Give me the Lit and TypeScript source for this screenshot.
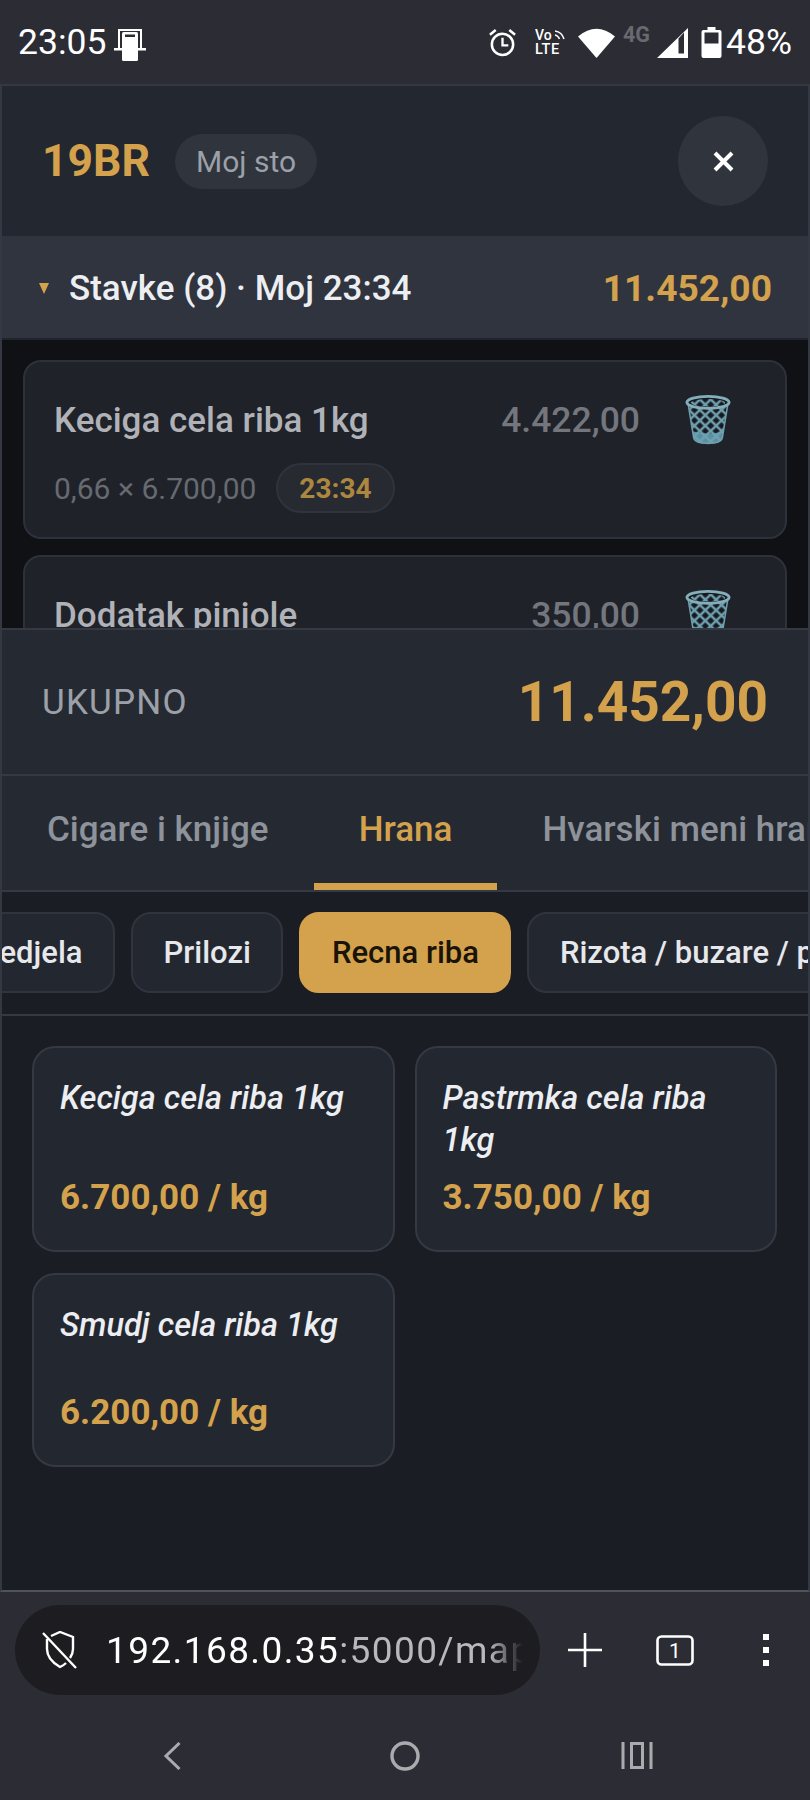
import { LitElement, html, css, svg } from 'lit';
import { customElement } from 'lit/decorators.js';

type Line = { name: string; amount: string; sub?: string; time?: string };
type Dish = { name: string; price: string };

const lines: Line[] = [
  { name: 'Keciga cela riba 1kg', amount: '4.422,00', sub: '0,66 × 6.700,00', time: '23:34' },
  { name: 'Dodatak pinjole', amount: '350,00' },
];

const dishes: Dish[] = [
  { name: 'Keciga cela riba 1kg', price: '6.700,00 / kg' },
  { name: 'Pastrmka cela riba 1kg', price: '3.750,00 / kg' },
  { name: 'Smudj cela riba 1kg', price: '6.200,00 / kg' },
];

const trash = svg`
  <svg class="trash" viewBox="0 0 48 56" width="46" height="52" preserveAspectRatio="none">
    <defs>
      <pattern id="mesh" width="8" height="8" patternUnits="userSpaceOnUse" patternTransform="rotate(45 24 20)">
        <rect width="8" height="8" fill="none" stroke="#6f9fae" stroke-width="2.6"/>
      </pattern>
    </defs>
    <path d="M3 9 L9 47 Q10 53 24 53 Q38 53 39 47 L45 9 Z" fill="#161a20"/>
    <path d="M3 9 L9 47 Q10 53 24 53 Q38 53 39 47 L45 9 Z" fill="url(#mesh)"/>
    <path d="M8 40 Q24 45 40 40 L39 47 Q38 54 24 54 Q10 54 9 47 Z" fill="#6ba3b5" opacity=".85"/>
    <path d="M3 9 L9 47 Q10 53 24 53 Q38 53 39 47 L45 9" fill="none" stroke="#6f9fae" stroke-width="1.6"/>
    <ellipse cx="24" cy="9" rx="22" ry="6.5" fill="#161a20" stroke="#86aeba" stroke-width="3"/>
    <ellipse cx="24" cy="9.5" rx="18" ry="4" fill="url(#mesh)"/>
  </svg>`;

@customElement('app-root')
export class AppRoot extends LitElement {
  static styles = css`
    :host {
      display: block;
      width: 810px;
      height: 1800px;
      overflow: hidden;
      background: #2c2c34;
      font-family: Roboto, "Liberation Sans", sans-serif;
      color: #eceef2;
    }
    .page { display: flex; flex-direction: column; height: 1800px; }

    .status {
      height: 84px;
      flex: none;
      box-sizing: border-box;
      padding: 0 18px;
      display: flex;
      align-items: center;
      justify-content: space-between;
      font-size: 35.5px;
      color: #fff;
    }
    .status-side { display: flex; align-items: center; }
    .status-left svg { margin: 5px 0 0 8px; }
    .status-right svg { display: block; flex: none; }
    .pct { margin-left: 4px; }

    .panel {
      flex: 1;
      min-height: 0;
      display: flex;
      flex-direction: column;
      overflow: hidden;
      border: 2px solid #333843;
      border-bottom-color: #50535c;
      background: #1a1d24;
    }

    .head {
      height: 152px;
      flex: none;
      box-sizing: border-box;
      padding: 0 40px 0 40px;
      display: flex;
      align-items: center;
      background: #23272f;
      border-bottom: 2px solid #2f343e;
    }
    .code { font-size: 44.5px; font-weight: 700; color: #d4a24c; }
    .tag {
      margin-left: 25px;
      height: 55px;
      padding: 0 21px;
      display: flex;
      align-items: center;
      border-radius: 28px;
      background: #2f343d;
      color: #9ca0a8;
      font-size: 30px;
    }
    .close {
      margin-left: auto;
      width: 90px;
      height: 90px;
      border-radius: 50%;
      background: #2f343d;
      display: flex;
      align-items: center;
      justify-content: center;
    }

    .bar {
      height: 100px;
      flex: none;
      box-sizing: border-box;
      padding: 0 36px 0 37px;
      display: flex;
      align-items: center;
      background: #2f343e;
      font-size: 35px;
      font-weight: 500;
    }
    .caret {
      width: 0;
      height: 0;
      border: 5.5px solid transparent;
      border-top: 11px solid #d4a24c;
      border-bottom: 0;
      margin-right: 20px;
    }
    .bar-total { margin-left: auto; color: #d4a24c; font-size: 37.2px; font-weight: 700; }

    .list {
      height: 290px;
      flex: none;
      box-sizing: border-box;
      overflow: hidden;
      padding: 20px 21px 0;
      background: #0f1115;
      border-top: 2px solid #20242c;
      display: flex;
      flex-direction: column;
      gap: 16px;
    }
    .line {
      flex: none;
      height: 179px;
      box-sizing: border-box;
      padding: 30px 30px 0 29px;
      border: 2px solid #2d3139;
      border-radius: 18px;
      background: #1f2229;
    }
    .line-top { display: flex; align-items: center; height: 56px; }
    .line-name { font-size: 35px; font-weight: 500; color: #b0b2b7; flex: 1; white-space: nowrap; }
    .line-amount { font-size: 35.5px; font-weight: 500; color: #74767e; }
    .trash { margin-left: 45px; margin-right: 24px; flex: none; }
    .line-sub { display: flex; align-items: center; margin-top: 15px; font-size: 30px; color: #666a71; }
    .time {
      margin-left: 20px;
      height: 50px;
      padding: 0 21px;
      display: flex;
      align-items: center;
      border-radius: 25px;
      background: #272a31;
      border: 2px solid #2f333b;
      color: #ac8740;
      font-size: 28px;
      font-weight: 700;
      box-sizing: border-box;
    }

    .total {
      height: 148px;
      flex: none;
      box-sizing: border-box;
      padding: 0 40px;
      display: flex;
      align-items: center;
      justify-content: space-between;
      background: #252a32;
      border-top: 2px solid #343944;
      border-bottom: 2px solid #343944;
    }
    .total-label { font-size: 35px; color: #9ca0a8; letter-spacing: 1.2px; }
    .total-value { font-size: 55px; font-weight: 700; color: #d4a24c; }

    .tabs {
      height: 116px;
      flex: none;
      box-sizing: border-box;
      display: flex;
      overflow: hidden;
      background: #252a32;
      border-bottom: 2px solid #343944;
    }
    .tab {
      flex: none;
      box-sizing: border-box;
      padding: 33px 45px 0;
      font-size: 35px;
      font-weight: 500;
      color: #8e929a;
      border-bottom: 7px solid transparent;
      white-space: nowrap;
    }
    .tab.on { color: #d4a24c; border-bottom-color: #d4a24c; }

    .chips {
      height: 124px;
      flex: none;
      box-sizing: border-box;
      padding-bottom: 1px;
      display: flex;
      align-items: center;
      gap: 16px;
      overflow: hidden;
      background: #1a1d24;
      border-bottom: 2px solid #343944;
    }
    .chip {
      flex: none;
      box-sizing: border-box;
      height: 81px;
      padding: 0 30.5px;
      display: flex;
      align-items: center;
      border: 2px solid #2f343e;
      border-radius: 20px;
      background: #23272f;
      font-size: 31px;
      font-weight: 500;
      color: #e6e8ec;
      white-space: nowrap;
    }
    .chip.first { margin-left: -57px; }
    .chip.on { background: #d4a24c; border-color: #d4a24c; color: #1a1408; }

    .grid {
      flex: 1;
      min-height: 0;
      box-sizing: border-box;
      padding: 30px 31px 0 30px;
      display: grid;
      grid-template-columns: 1fr 1fr;
      grid-auto-rows: min-content;
      gap: 21px 20px;
    }
    .dish {
      box-sizing: border-box;
      min-height: 194px;
      padding: 30px 26px;
      border: 2px solid #343944;
      border-radius: 23px;
      background: #23272f;
      display: flex;
      flex-direction: column;
      justify-content: space-between;
    }
    .dish-name {
      font-size: 32.5px;
      font-weight: 500;
      font-style: italic;
      line-height: 41.5px;
      color: #eceef2;
      margin-bottom: 14px;
    }
    .dish-price { font-size: 35px; font-weight: 700; color: #d4a24c; line-height: 45px; }

    .chrome { height: 208px; flex: none; }
    .toolbar {
      height: 119px;
      box-sizing: border-box;
      padding: 13px 0 0 15px;
      display: flex;
    }
    .url {
      width: 525px;
      height: 90px;
      box-sizing: border-box;
      padding-left: 26px;
      border-radius: 45px;
      background: #1d1d21;
      display: flex;
      align-items: center;
      overflow: hidden;
    }
    .url-text {
      margin-left: 29px;
      width: 417px;
      overflow: hidden;
      white-space: nowrap;
      font-size: 37px;
      letter-spacing: 1.4px;
      color: #fff;
      -webkit-mask-image: linear-gradient(90deg, #000 92%, transparent 100%);
      mask-image: linear-gradient(90deg, #000 92%, transparent 100%);
    }
    .url-text span { color: #b9b9bd; }
    .tools { display: flex; align-items: center; height: 90px; }
    .nav {
      height: 89px;
      display: flex;
      align-items: center;
      padding-left: 163px;
      box-sizing: border-box;
    }
    .nav svg { flex: none; }
  `;

  private statusBar() {
    return html`
      <div class="status">
        <div class="status-side status-left">
          <span>23:05</span>
          <svg width="32" height="32" viewBox="0 0 32 32" fill="#fff">
            <path d="M4 0h24v20h-2V2H6v18H4z"/>
            <rect x="8" y="3" width="16" height="29" rx="1.5"/>
            <rect x="11" y="5.500" width="10" height="2.500" fill="#2c2c34"/>
            <rect x="0" y="19" width="8" height="2.500"/>
            <rect x="24" y="19" width="8" height="2.500"/>
          </svg>
        </div>
        <div class="status-side status-right">
          <svg width="29" height="30" viewBox="0 0 30 31" fill="none" stroke="#fff" stroke-width="2.6">
            <circle cx="15" cy="18" r="11"/>
            <path d="M15 11v8h6" stroke-width="2.4"/>
            <path d="M2 8l6-5M28 8l-6-5"/>
          </svg>
          <svg style="margin-left:18px" width="32" height="30" viewBox="0 -2 32 30" fill="#fff">
            <text x="0" y="11" font-family="Roboto" font-size="14" font-weight="500">Vo</text>
            <path d="M20 2q7 1 9 8M20 6q3 .5 4.500 4" fill="none" stroke="#fff" stroke-width="1.500"/>
            <text x="0" y="25" font-family="Roboto" font-size="14.500" font-weight="500" letter-spacing=".5">LTE</text>
          </svg>
          <svg style="margin-left:11px;margin-top:1px" width="37" height="31" viewBox="0 0 37 31" fill="#fff">
            <path d="M0 9.500Q18.500 -6 37 9.500L18.500 31Z"/>
          </svg>
          <svg style="margin:0 0 13px 8px" width="29" height="20" viewBox="0 0 29 20">
            <text x="0" y="16" font-family="Roboto" font-size="21.500" font-weight="700" fill="#69696f">4G</text>
          </svg>
          <svg style="margin:2px 0 0 5px" width="31" height="30" viewBox="0 0 31 30" fill-rule="evenodd" fill="#fff">
            <path d="M31 0V30H0ZM21.500 10.500V25.500H27V4.500Z"/>
          </svg>
          <svg style="margin-left:13px" width="21" height="31" viewBox="0 0 21 31" fill="#fff">
            <path d="M6.500 0h8v3h4a2 2 0 0 1 2 2v24a2 2 0 0 1-2 2H2.500a2 2 0 0 1-2-2V5a2 2 0 0 1 2-2h4z"/>
            <rect x="3.500" y="5.500" width="14" height="11" fill="#2c2c34"/>
          </svg>
          <span class="pct">48%</span>
        </div>
      </div>`;
  }

  private chrome() {
    return html`
      <div class="chrome">
        <div class="toolbar">
          <div class="url">
            <svg width="36" height="38" viewBox="0 0 36 38" fill="none" stroke="#fff" stroke-width="2.4" style="flex:none">
              <path d="M10 5 19 1l13 5v12c0 3-1 6-3 9"/>
              <path d="M25 32c-2 2-4 3-6 4-7-4-13-10-13-18V8"/>
              <path d="M2 2l33 35"/>
            </svg>
            <div class="url-text">192.168.0.35<span>:5000/map/table</span></div>
          </div>
          <div class="tools">
            <svg style="margin-left:28px" width="34" height="34" viewBox="0 0 34 34" stroke="#fff" stroke-width="2.6"><path d="M17 0v34M0 17h34"/></svg>
            <svg style="margin-left:54px" width="38" height="31" viewBox="0 0 38 31" fill="none">
              <rect x="1.500" y="1.500" width="35" height="28" rx="4" stroke="#fff" stroke-width="2.6"/>
              <text x="19" y="23" text-anchor="middle" font-family="Roboto" font-size="21" fill="#fff" stroke="none">1</text>
            </svg>
            <svg style="margin-left:69px" width="6" height="32" viewBox="0 0 6 32" fill="#fff">
              <rect width="6" height="6" y="0"/><rect width="6" height="6" y="13"/><rect width="6" height="6" y="26"/>
            </svg>
          </div>
        </div>
        <div class="nav">
          <svg width="18" height="28" viewBox="0 0 18 28" fill="none" stroke="#ababaf" stroke-width="3"><path d="M16.500 1 3 14l13.500 13"/></svg>
          <svg style="margin-left:209px" width="30" height="30" viewBox="0 0 30 30" fill="none" stroke="#ababaf" stroke-width="3.4"><circle cx="15" cy="15" r="13"/></svg>
          <svg style="margin-left:201px" width="32" height="27" viewBox="0 0 32 27" fill="none" stroke="#ababaf" stroke-width="3"><path d="M2 0v27M10.500 1.500h11v24h-11zM30 0v27"/></svg>
        </div>
      </div>`;
  }

  render() {
    return html`
      <div class="page">
        ${this.statusBar()}
        <div class="panel">
          <div class="head">
            <span class="code">19BR</span>
            <span class="tag">Moj sto</span>
            <div class="close">
              <svg width="21" height="21" viewBox="0 0 21 21" stroke="#fff" stroke-width="4"><path d="M2 2l17 17M19 2 2 19"/></svg>
            </div>
          </div>
          <div class="bar">
            <span class="caret"></span>
            <span>Stavke (8) · Moj 23:34</span>
            <span class="bar-total">11.452,00</span>
          </div>
          <div class="list">
            ${lines.map(l => html`
              <div class="line">
                <div class="line-top">
                  <span class="line-name">${l.name}</span>
                  <span class="line-amount">${l.amount}</span>
                  ${trash}
                </div>
                ${l.sub ? html`<div class="line-sub"><span>${l.sub}</span><span class="time">${l.time}</span></div>` : ''}
              </div>`)}
          </div>
          <div class="total">
            <span class="total-label">UKUPNO</span>
            <span class="total-value">11.452,00</span>
          </div>
          <div class="tabs">
            <div class="tab">Cigare i knjige</div>
            <div class="tab on">Hrana</div>
            <div class="tab">Hvarski meni hrana</div>
          </div>
          <div class="chips">
            <div class="chip first">Nedjela</div>
            <div class="chip">Prilozi</div>
            <div class="chip on">Recna riba</div>
            <div class="chip">Rizota / buzare / paste</div>
          </div>
          <div class="grid">
            ${dishes.map(d => html`
              <div class="dish">
                <div class="dish-name">${d.name}</div>
                <div class="dish-price">${d.price}</div>
              </div>`)}
          </div>
        </div>
        ${this.chrome()}
      </div>`;
  }
}
